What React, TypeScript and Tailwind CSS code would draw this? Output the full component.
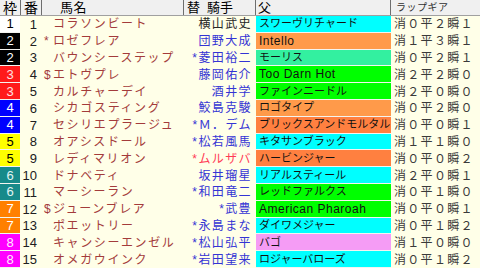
const waku: Record<number, { bg: string; fg: string }> = {
  1: { bg: "bg-white", fg: "text-black" },
  2: { bg: "bg-black", fg: "text-white" },
  3: { bg: "bg-[#ff1a1a]", fg: "text-[#ffe0e0]" },
  4: { bg: "bg-[#0000ff]", fg: "text-white" },
  5: { bg: "bg-[#ffff00]", fg: "text-black" },
  6: { bg: "bg-[#178a8a]", fg: "text-[#e0f4f4]" },
  7: { bg: "bg-[#ff8000]", fg: "text-white" },
  8: { bg: "bg-[#ff00ff]", fg: "text-[#ffe8ff]" },
}

const sireBg = {
  cyan: "bg-[#00ffff]",
  orange: "bg-[#ff9a4a]",
  orange2: "bg-[#ff8040]",
  mint: "bg-[#33f0a0]",
  green: "bg-[#00ff00]",
  pink: "bg-[#f59cf5]",
}

type Row = {
  w: number
  no: number
  mark: string
  name: string
  jockey: string
  jc: string
  sire: string
  sc: keyof typeof sireBg
  lap: string
}

const blue = "text-[#3434d4]"

const rows: Row[] = [
  { w: 1, no: 1, mark: "", name: "コラソンビート", jockey: "横山武史", jc: "text-[#262626]", sire: "スワーヴリチャード", sc: "cyan", lap: "消０平２瞬１" },
  { w: 2, no: 2, mark: "*", name: "ロゼフレア", jockey: "団野大成", jc: blue, sire: "Intello", sc: "orange", lap: "消１平３瞬１" },
  { w: 2, no: 3, mark: "", name: "バウンシーステップ", jockey: "*菱田裕二", jc: blue, sire: "モーリス", sc: "mint", lap: "消０平２瞬１" },
  { w: 3, no: 4, mark: "$", name: "エトヴプレ", jockey: "藤岡佑介", jc: blue, sire: "Too Darn Hot", sc: "green", lap: "消２平２瞬０" },
  { w: 3, no: 5, mark: "", name: "カルチャーデイ", jockey: "酒井学", jc: blue, sire: "ファインニードル", sc: "green", lap: "消２平０瞬０" },
  { w: 4, no: 6, mark: "", name: "シカゴスティング", jockey: "鮫島克駿", jc: blue, sire: "ロゴタイプ", sc: "orange", lap: "消０平２瞬０" },
  { w: 4, no: 7, mark: "", name: "セシリエプラージュ", jockey: "*Ｍ．デム", jc: blue, sire: "ブリックスアンドモルタル", sc: "orange2", lap: "消０平０瞬１" },
  { w: 5, no: 8, mark: "", name: "オアシスドール", jockey: "*松若風馬", jc: blue, sire: "キタサンブラック", sc: "cyan", lap: "消１平１瞬０" },
  { w: 5, no: 9, mark: "", name: "レディマリオン", jockey: "*ムルザバ", jc: "text-[#ff3a55]", sire: "ハービンジャー", sc: "orange2", lap: "消０平０瞬２" },
  { w: 6, no: 10, mark: "", name: "ドナベティ", jockey: "坂井瑠星", jc: blue, sire: "リアルスティール", sc: "cyan", lap: "消２平０瞬１" },
  { w: 6, no: 11, mark: "", name: "マーシーラン", jockey: "*和田竜二", jc: blue, sire: "レッドファルクス", sc: "green", lap: "消０平１瞬０" },
  { w: 7, no: 12, mark: "$", name: "ジューンブレア", jockey: "*武豊", jc: blue, sire: "American Pharoah", sc: "green", lap: "消０平０瞬１" },
  { w: 7, no: 13, mark: "", name: "ポエットリー", jockey: "*永島まな", jc: blue, sire: "ダイワメジャー", sc: "cyan", lap: "消０平１瞬２" },
  { w: 8, no: 14, mark: "", name: "キャンシーエンゼル", jockey: "*松山弘平", jc: blue, sire: "バゴ", sc: "pink", lap: "消１平０瞬０" },
  { w: 8, no: 15, mark: "", name: "オメガウインク", jockey: "*岩田望来", jc: blue, sire: "ロジャーバローズ", sc: "cyan", lap: "消０平１瞬２" },
]

// latin sire names are set a bit larger than the kana ones
const isLatin = (s: string) => /^[\x20-\x7e]+$/.test(s)

export default function App() {
  return (
    <div className="w-[480px] h-[268px] overflow-hidden bg-[#ffffe8] flex flex-col font-['Liberation_Sans','Noto_Sans_CJK_JP',sans-serif] leading-none">
      {/* header */}
      <div className="h-[16px] shrink-0 flex bg-[#f0f0f0] border-b border-[#a0a0a0] text-[13px] text-black">
        <div className="w-[21px] flex items-center justify-center border-r border-[#6e6e6e] text-[14px]">枠</div>
        <div className="w-[21px] flex items-center justify-center border-r border-[#6e6e6e] text-[14px]">番</div>
        <div className="w-[142px] flex items-center pl-[18px] border-r border-[#6e6e6e] tracking-[0.5px]">馬名</div>
        <div className="w-[72px] flex items-center pl-[3px] gap-[7px] border-r border-[#6e6e6e]">
          <span>替</span>
          <span>騎手</span>
        </div>
        <div className="w-[135px] flex items-center pl-[2px] border-r border-[#6e6e6e]">父</div>
        <div className="flex-1 flex items-center pl-[5px] text-[10px] text-[#303030] tracking-[0.5px]">ラップギア</div>
      </div>

      {/* body */}
      <div className="flex-1 grid grid-rows-[repeat(15,minmax(0,1fr))]">
        {rows.map((r) => (
          <div key={r.no} className="flex min-h-0">
            <div
              className={`w-[20px] flex items-center justify-center border-b border-[#f4f4f0] text-[13px] ${waku[r.w].bg} ${waku[r.w].fg}`}
            >
              {r.w}
            </div>
            <div className="w-[22px] flex items-center justify-end pr-[5px] text-[13px] text-[#202020]">
              {r.no}
            </div>
            <div className="w-[142px] flex items-center pl-[2px] text-[12px] text-[#a33b3b] tracking-[1.6px] whitespace-nowrap">
              <span className="w-[9px] shrink-0 tracking-normal">{r.mark}</span>
              <span>{r.name}</span>
            </div>
            <div
              className={`w-[72px] flex items-center justify-end pr-[4px] text-[12px] tracking-[1.4px] whitespace-nowrap ${r.jc}`}
            >
              {r.jockey}
            </div>
            <div
              className={`w-[135px] flex items-center pl-[3px] border-b border-[#f4f4f0] text-[#111] whitespace-nowrap overflow-hidden ${sireBg[r.sc]} ${
                isLatin(r.sire) ? "text-[12px] tracking-[0.5px]" : "text-[11px]"
              }`}
            >
              {r.sire}
            </div>
            <div className="flex-1 flex items-center pl-[3px] text-[12px] text-[#3a3a3a] tracking-[1.3px] whitespace-nowrap">
              {r.lap}
            </div>
          </div>
        ))}
      </div>
    </div>
  )
}
